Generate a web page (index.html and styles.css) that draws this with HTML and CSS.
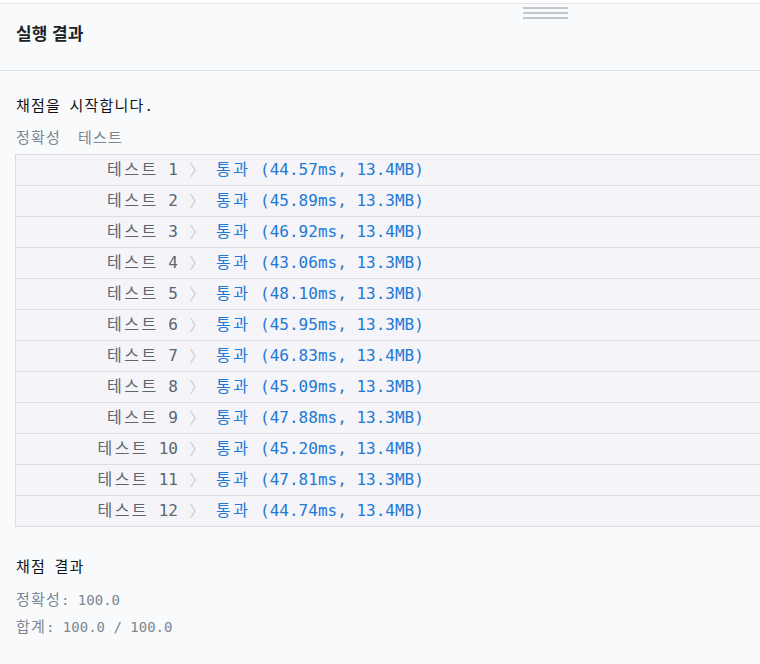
FILE: index.html
```html
<!DOCTYPE html>
<html lang="ko">
<head>
<meta charset="utf-8">
<link rel="stylesheet" href="styles.css">
</head>
<body>
<div class="panel">
  <div class="grip" aria-hidden="true"><span></span><span></span><span></span></div>
  <div class="panel-header"><h5 class="title">실행 결과</h5></div>
  <div class="console">
    <p class="line start"><span class="ko">채점을</span> <span class="ko">시작합니다</span>.</p>
    <p class="line sub"><span class="ko">정확성</span>&nbsp;&nbsp;<span class="ko">테스트</span></p>
    <table class="results">
      <tbody>
        <tr><td class="lbl"><span class="ko">테스트</span> 1</td><td class="chev">〉</td><td class="res"><span class="ko">통과</span> (44.57ms, 13.4MB)</td></tr>
        <tr><td class="lbl"><span class="ko">테스트</span> 2</td><td class="chev">〉</td><td class="res"><span class="ko">통과</span> (45.89ms, 13.3MB)</td></tr>
        <tr><td class="lbl"><span class="ko">테스트</span> 3</td><td class="chev">〉</td><td class="res"><span class="ko">통과</span> (46.92ms, 13.4MB)</td></tr>
        <tr><td class="lbl"><span class="ko">테스트</span> 4</td><td class="chev">〉</td><td class="res"><span class="ko">통과</span> (43.06ms, 13.3MB)</td></tr>
        <tr><td class="lbl"><span class="ko">테스트</span> 5</td><td class="chev">〉</td><td class="res"><span class="ko">통과</span> (48.10ms, 13.3MB)</td></tr>
        <tr><td class="lbl"><span class="ko">테스트</span> 6</td><td class="chev">〉</td><td class="res"><span class="ko">통과</span> (45.95ms, 13.3MB)</td></tr>
        <tr><td class="lbl"><span class="ko">테스트</span> 7</td><td class="chev">〉</td><td class="res"><span class="ko">통과</span> (46.83ms, 13.4MB)</td></tr>
        <tr><td class="lbl"><span class="ko">테스트</span> 8</td><td class="chev">〉</td><td class="res"><span class="ko">통과</span> (45.09ms, 13.3MB)</td></tr>
        <tr><td class="lbl"><span class="ko">테스트</span> 9</td><td class="chev">〉</td><td class="res"><span class="ko">통과</span> (47.88ms, 13.3MB)</td></tr>
        <tr><td class="lbl"><span class="ko">테스트</span> 10</td><td class="chev">〉</td><td class="res"><span class="ko">통과</span> (45.20ms, 13.4MB)</td></tr>
        <tr><td class="lbl"><span class="ko">테스트</span> 11</td><td class="chev">〉</td><td class="res"><span class="ko">통과</span> (47.81ms, 13.3MB)</td></tr>
        <tr><td class="lbl"><span class="ko">테스트</span> 12</td><td class="chev">〉</td><td class="res"><span class="ko">통과</span> (44.74ms, 13.4MB)</td></tr>
      </tbody>
    </table>
    <p class="line summary-title"><span class="ko">채점</span> <span class="ko">결과</span></p>
    <p class="line sub"><span class="ko">정확성</span>: 100.0</p>
    <p class="line sub"><span class="ko">합계</span>: 100.0 / 100.0</p>
  </div>
</div>
</body>
</html>
```
FILE: styles.css
```css
html, body {
  margin: 0;
  padding: 0;
  background: #ffffff;
  overflow: hidden;
}
.panel {
  position: relative;
  margin-top: 3px;
  border-top: 1px solid #e2e4ea;
  background: #f9fafc;
  height: 660px;
}
.grip {
  position: absolute;
  left: 523px;
  top: 3px;
  width: 45px;
  display: flex;
  flex-direction: column;
  gap: 3px;
}
.grip span {
  display: block;
  height: 2px;
  background: #c1c6cc;
}
.panel-header {
  height: 66px;
  display: flex;
  align-items: center;
  padding-left: 16px;
  border-bottom: 1px solid #dcdfe5;
}
.title {
  margin: 0 0 9px 0;
  font-family: "Noto Sans CJK KR", sans-serif;
  font-size: 17px;
  font-weight: 700;
  color: #1e2327;
}
.console {
  padding: 22px 0 0 0;
  font-family: "DejaVu Sans Mono", "Noto Sans CJK KR", monospace;
  font-size: 14px;
}
.ko {
  font-size: 15px;
  letter-spacing: 1.2px;
}
.line {
  margin: 0;
  padding-left: 16px;
  line-height: 27px;
}
.start {
  color: #101418;
  margin-bottom: 5px;
}
.sub {
  color: #7b8690;
}
.results {
  margin: 2px 0 0 15px;
  width: 900px;
  border-collapse: collapse;
  background: #f4f4f9;
  font-size: 16px;
}
.results .ko {
  font-size: 16px;
  letter-spacing: 2.5px;
}
.results td {
  border-top: 1px solid #dcdce4;
  border-bottom: 1px solid #dcdce4;
  height: 30px;
  padding: 0;
  white-space: nowrap;
  line-height: 30px;
}
.results tr td:first-child {
  border-left: 1px solid #dcdce4;
}
.lbl {
  width: 162px;
  text-align: right;
  color: #5b6670;
}
.chev {
  width: 38px;
  text-align: center;
  color: #c8ccd2;
  font-family: "Noto Sans CJK KR", sans-serif;
  font-size: 15px;
}
.res {
  color: #2179d6;
}
.summary-title {
  margin-top: 27px;
  color: #101418;
  margin-bottom: 6px;
}
```
